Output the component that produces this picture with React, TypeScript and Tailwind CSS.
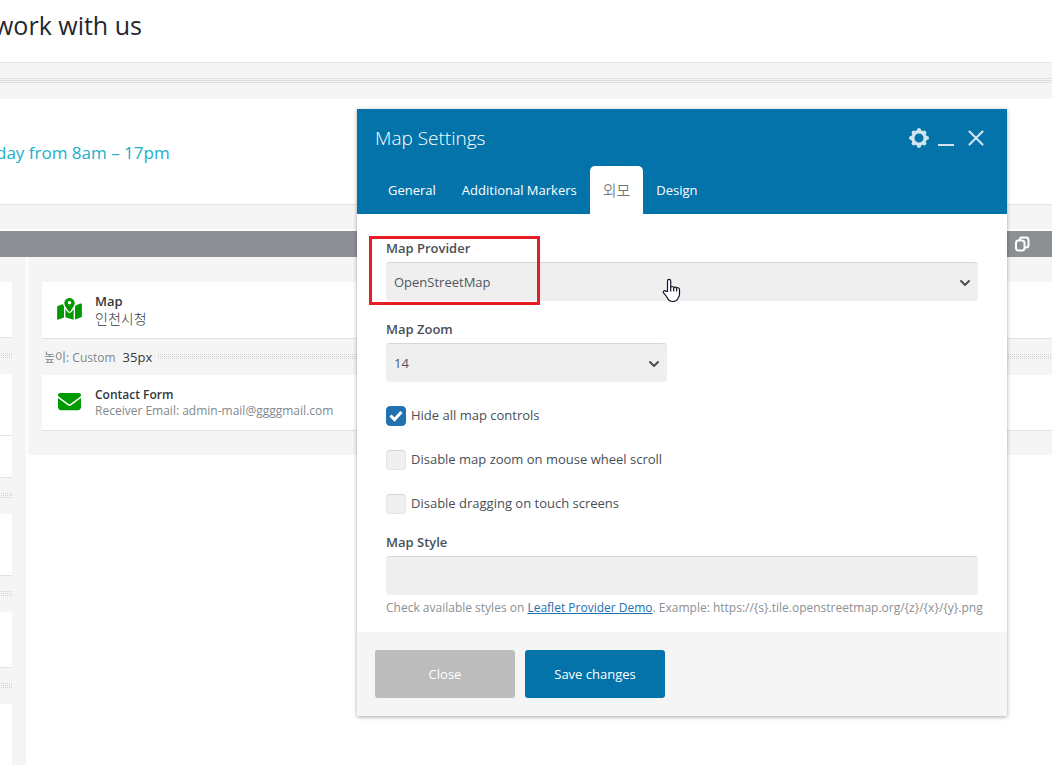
import React, { useState } from 'react';
import { FaMapLocationDot, FaEnvelope } from 'react-icons/fa6';
import { ChevronDown, X } from 'lucide-react';

const TABS = ['General', 'Additional Markers', '외모', 'Design'];

const OPTIONS = [
  { id: 'hide-controls', label: 'Hide all map controls', checked: true },
  { id: 'disable-zoom', label: 'Disable map zoom on mouse wheel scroll', checked: false },
  { id: 'disable-drag', label: 'Disable dragging on touch screens', checked: false },
];

const Dots = ({ className = '' }: { className?: string }) => (
  <div
    className={`h-[5px] bg-[linear-gradient(90deg,#f5f5f5_1px,transparent_1px),linear-gradient(#d2d2d2_1px,transparent_1px)] bg-[length:2px_2px] ${className}`}
  />
);

const GearIcon = () => (
  <svg viewBox="0 0 20 20" className="w-5 h-5" fill="none" stroke="currentColor">
    <circle cx="10" cy="10" r="6.2" strokeWidth="3.4" />
    <g strokeWidth="4" strokeLinecap="round">
      <path d="M10 2v.6M10 17.4v.6M2 10h.6M17.4 10h.6M4.600 4.600l.3.3M15.100 15.100l.3.3M4.600 15.400l.3-.3M15.100 4.900l.3-.3" />
    </g>
  </svg>
);

const CloneIcon = () => (
  <svg viewBox="0 0 16 16" className="w-4 h-4" fill="none" stroke="currentColor" strokeWidth="2">
    <rect x="2" y="4.500" width="8.500" height="10" rx="2.500" />
    <path d="M5.500 4.500V4a2.500 2.500 0 0 1 2.500-2.500h4A2.500 2.500 0 0 1 14.500 4v5a2.500 2.500 0 0 1-2.500 2.500h-1" />
  </svg>
);

const HandCursor = () => (
  <svg viewBox="0 0 19 25" className="absolute left-[305px] top-[169px] w-[19px] h-[25px] pointer-events-none">
    <path
      d="M5.500 13.500V3a1.500 1.500 0 0 1 3.200 0v6.500c.3-1.400 2.800-1.300 3 .3.400-1.200 2.700-1 2.900.5.500-1 2.700-.7 2.900.8v5.400c0 2-1.500 3.200-1.900 4.500-.8 1.500-2.500 2.500-4.600 2.500-3 0-4.700-1.500-5.600-3.500-.7-1.600-2.300-3.200-3.600-4.800-1.400-1.800.8-3.200 2.200-1.900z"
      fill="#fff"
      stroke="#15152b"
      strokeWidth="1.200"
      strokeLinejoin="round"
    />
    <path d="M8.700 9.500v4M11.700 10v3.500M14.600 10.500v3" stroke="#15152b" strokeWidth="1.200" fill="none" />
  </svg>
);

const SideColumn = () => (
  <div className="w-[26px] shrink-0 bg-[#f5f5f5] pr-[14px] pt-[25px]">
    <div className="h-14 bg-white border-b border-[#e3e3e3]" />
    <Dots className="mt-[15px] mb-4" />
    <div className="h-[62px] bg-white border-b border-[#e3e3e3]" />
    <div className="h-[42px] bg-white border-b border-[#e3e3e3]" />
    <Dots className="mt-[15px] mb-4" />
    <div className="h-[62px] bg-white border-b border-[#e3e3e3]" />
    <Dots className="mt-[15px] mb-4" />
    <div className="h-14 bg-white border-b border-[#e3e3e3]" />
    <Dots className="mt-[15px] mb-4" />
    <div className="h-[61px] bg-white" />
  </div>
);

const Builder = () => (
  <main className="flex flex-col min-h-screen">
    <section className="h-[63px] bg-white border-b border-[#e5e5e5] overflow-hidden">
      <h1 className="-ml-[6px] pt-[6px] text-[25px] leading-[38px] text-[#23282d] whitespace-nowrap">work with us</h1>
    </section>
    <div className="h-9 bg-[#f5f5f5] pt-[15px]">
      <div className="h-[5px] bg-[linear-gradient(#dedede_1px,transparent_1px)] bg-[length:2px_2px]" />
    </div>
    <section className="h-[106px] bg-white border-b border-[#e5e5e5] overflow-hidden">
      <p className="-ml-1 pt-10 text-[17px] leading-7 text-[#21aeca] whitespace-nowrap">day from 8am – 17pm</p>
    </section>
    <div className="h-6 bg-[#f5f5f5]" />
    <div className="mt-[2px] h-[26px] bg-[#8c8f94] flex items-center justify-end pr-[22px] text-white">
      <button type="button" aria-label="Duplicate row">
        <CloneIcon />
      </button>
    </div>

    <div className="flex flex-1 gap-[2px]">
      <SideColumn />
      <div className="flex-1 self-start bg-[#f5f5f5] pt-[25px] pl-[14px] pb-6">
        <div className="flex items-center h-[57px] bg-white border-b border-[#e3e3e3] pl-[15px]">
          <FaMapLocationDot className="w-[25px] h-[22px] mb-[2px] text-[#009900]" />
          <div className="pl-[13px] text-[13px] leading-[18px] text-[#32373c]">
            <div className="font-semibold">Map</div>
            <div className="text-[14px] font-light">인천시청</div>
          </div>
        </div>
        <div className="flex items-center h-9 text-[12px] text-[#82878c]">
          <span className="pl-[2px] pt-[2px]">높이: Custom</span>
          <span className="pl-[7px] pr-[5px] pt-[2px] text-[13px] text-[#32373c]">35px</span>
          <Dots className="flex-1 mb-[2px]" />
        </div>
        <div className="flex items-center h-14 bg-white border-b border-[#e3e3e3] pl-4">
          <FaEnvelope className="w-[23px] h-[23px] mb-[2px] text-[#009900]" />
          <div className="pl-[14px] text-[12px] leading-4 text-[#82878c]">
            <div className="font-semibold text-[#32373c]">Contact Form</div>
            <div>Receiver Email: admin-mail@ggggmail.com</div>
          </div>
        </div>
      </div>
    </div>
  </main>
);

const fieldClass =
  'block w-full h-[39px] rounded bg-[#efefef] border-t border-[#d5d5d5] px-2 pt-[2px] text-[13px] text-[#50575e] appearance-none outline-none';

const SelectField = ({ id, label, options }: { id: string; label: string; options: string[] }) => (
  <div>
    <label htmlFor={id} className="block mb-1 text-[13px] leading-5 font-semibold">
      {label}
    </label>
    <div className="relative">
      <select id={id} className={fieldClass}>
        {options.map(option => (
          <option key={option}>{option}</option>
        ))}
      </select>
      <ChevronDown strokeWidth={3} className="absolute right-[5px] top-[13px] w-4 h-4 pointer-events-none" />
    </div>
  </div>
);

const MapSettings = () => {
  const [activeTab, setActiveTab] = useState('외모');
  const [options, setOptions] = useState(OPTIONS);

  const toggle = (id: string) =>
    setOptions(options.map(o => (o.id === id ? { ...o, checked: !o.checked } : o)));

  return (
    <div
      role="dialog"
      aria-label="Map Settings"
      className="absolute left-[357px] top-[109px] w-[650px] bg-white text-[#484f56] shadow-[0_1px_4px_rgba(0,0,0,0.35)]"
    >
      <header className="bg-[#0473aa] text-white px-[18px]">
        <div className="flex items-center justify-between h-[57px]">
          <h2 className="text-[19px] leading-7 font-light">Map Settings</h2>
          <div className="flex items-center gap-[9px] text-[#cfe4ee]">
            <button type="button" aria-label="Settings">
              <GearIcon />
            </button>
            <button type="button" aria-label="Minimize" className="w-4 h-4 border-b-2 border-current" />
            <button type="button" aria-label="Close window">
              <X className="w-[26px] h-[26px]" strokeWidth={2} />
            </button>
          </div>
        </div>
        <nav className="flex h-12">
          {TABS.map(tab => (
            <button
              key={tab}
              type="button"
              onClick={() => setActiveTab(tab)}
              className={`px-[13px] rounded-t-[5px] ${
                activeTab === tab ? 'bg-white text-[#555] text-[15px] font-light' : 'pt-[2px] text-[13px] font-medium'
              }`}
            >
              {tab}
            </button>
          ))}
        </nav>
      </header>

      <div className="px-[29px] pt-6 pb-[14px]">
        <SelectField id="map-provider" label="Map Provider" options={['OpenStreetMap', 'Google Maps']} />
        <div className="mt-[18px] w-[281px]">
          <SelectField id="map-zoom" label="Map Zoom" options={['14', '15', '16']} />
        </div>
        <div className="mt-6 flex flex-col gap-6">
          {options.map(option => (
            <div key={option.id} className="flex items-center h-5 text-[13px]">
              <span className="relative w-5 h-5">
                <input
                  type="checkbox"
                  id={option.id}
                  checked={option.checked}
                  onChange={() => toggle(option.id)}
                  className="block w-5 h-5 rounded appearance-none bg-[#efefef] border border-[#e6e6e6] border-t-[#d5d5d5] checked:bg-[#2271b1] checked:border-[#2271b1]"
                />
                {option.checked && (
                  <svg viewBox="0 0 20 20" className="absolute inset-0 w-5 h-5 pointer-events-none">
                    <path d="M4.500 9.500l4 4 7-7.500" fill="none" stroke="#fff" strokeWidth="3" />
                  </svg>
                )}
              </span>
              <label htmlFor={option.id} className="pl-[5px]">
                {option.label}
              </label>
            </div>
          ))}
        </div>
        <div className="mt-[18px]">
          <label htmlFor="map-style" className="block mb-1 text-[13px] leading-5 font-semibold">
            Map Style
          </label>
          <input id="map-style" type="text" className={fieldClass} />
          <p className="mt-[3px] text-[12px] leading-5 text-[#8c8f94] whitespace-nowrap">
            Check available styles on{' '}
            <a href="#" className="text-[#2271b1] underline">
              Leaflet Provider Demo
            </a>
            . Example: https://{'{s}'}.tile.openstreetmap.org/{'{z}/{x}/{y}'}.png
          </p>
        </div>
      </div>

      <footer className="flex gap-[10px] bg-[#f5f5f5] p-[18px] text-[13px] font-medium text-white">
        <button type="button" className="w-[140px] h-12 pt-[2px] rounded-[3px] bg-[#bcbcbc]">
          Close
        </button>
        <button type="button" className="w-[140px] h-12 pt-[2px] rounded-[3px] bg-[#0473aa]">
          Save changes
        </button>
      </footer>

      {/* Highlight around the provider field */}
      <div className="absolute left-3 top-[127px] w-[171px] h-[69px] border-[3px] border-[#e81c24] pointer-events-none" />
      <HandCursor />
    </div>
  );
};

export default function App() {
  return (
    <div className="relative min-h-screen bg-white overflow-hidden font-['Open_Sans','Noto_Sans_CJK_KR',sans-serif]">
      <Builder />
      <MapSettings />
    </div>
  );
}
